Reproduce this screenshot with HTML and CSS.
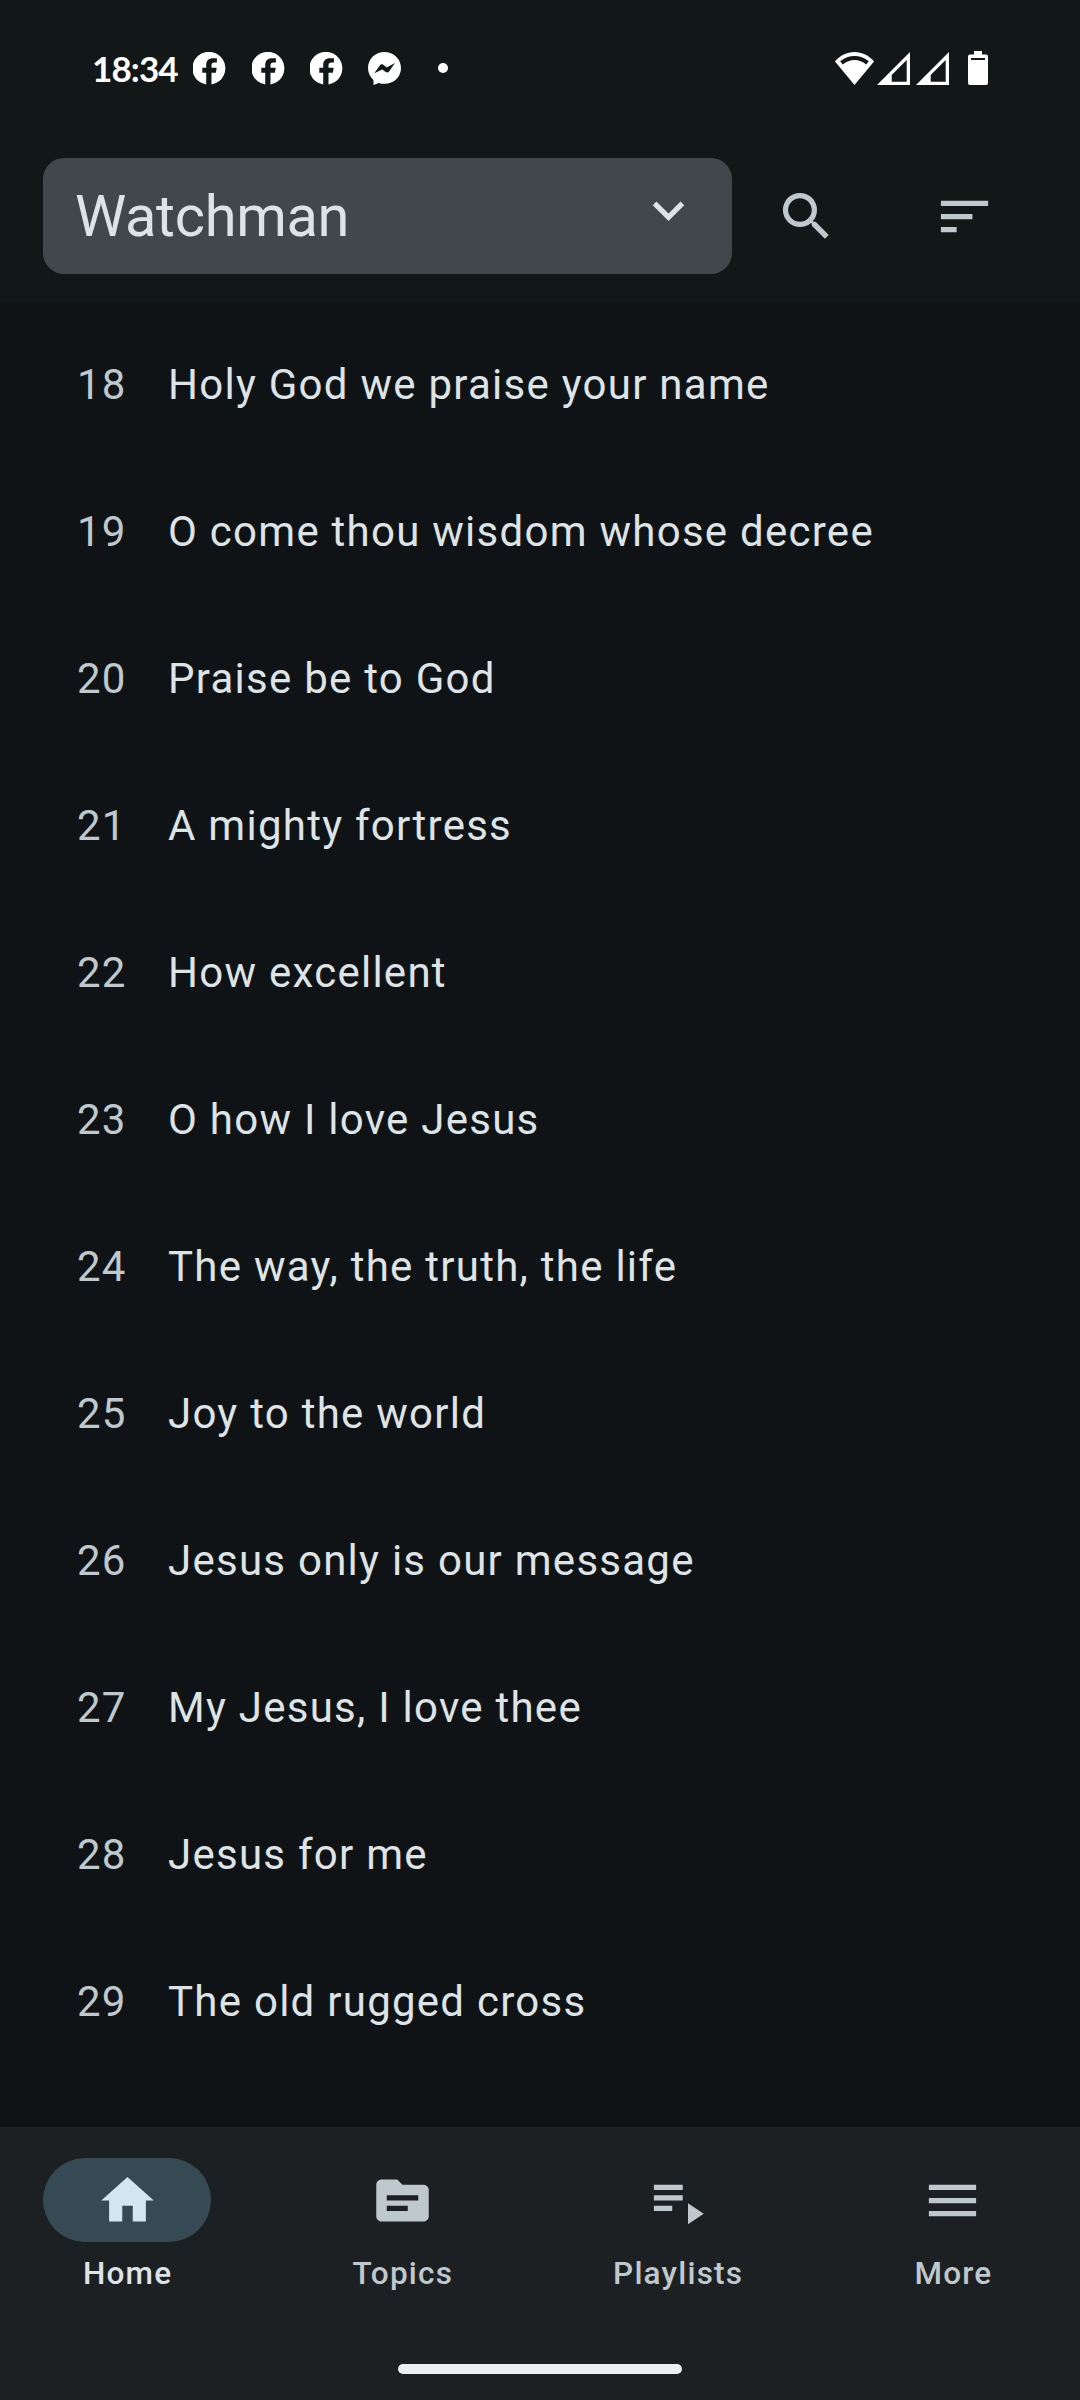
FILE: index.html
```html
<!DOCTYPE html>
<html lang="en">
<head>
<meta charset="utf-8">
<title>Watchman</title>
<link rel="stylesheet" href="styles.css">
</head>
<body>
<svg class="defs" aria-hidden="true">
  <symbol id="facebook" viewBox="0 0 33 33"><path d="M13.200 32.600V20.800H9.300v-5.100h3.900v-2.500c0-4.500 2.400-7 6.800-7h3.900v4.400h-2.500c-2 0-2.900.9-2.900 2.600v2.500h5.200l-.8 5.100h-4.400v11.800A16.500 16.500 0 1 0 13.200 32.600z"/></symbol>
  <symbol id="signal" viewBox="0 0 33 33"><path fill-rule="evenodd" d="M33 0v33H0zM29.700 8 14.700 23V29.700h15z"/></symbol>
</svg>
<div class="screen">
  <header class="top">
    <div class="status">
      <span class="clock">18:34</span>
      <div class="notifications">
        <svg class="app"><use href="#facebook"/></svg>
        <svg class="app"><use href="#facebook"/></svg>
        <svg class="app"><use href="#facebook"/></svg>
        <svg class="app" viewBox="0 0 33 33"><path fill-rule="evenodd" d="M16.500 0C7.200 0 0 6.900 0 16c0 4.800 2 8.900 5.500 11.900V33l5.200-2.100c1.800.6 3.800.9 5.800.9C25.800 31.800 33 25 33 16S25.800 0 16.500 0zM6.300 21.200 12 13.300c.8-1.100 2.100-1.300 3.200-.6l3.600 2.800 8.100-4.500-5.800 8.500c-.8 1.200-2.200 1.400-3.300.6l-3.600-2.600z"/></svg>
      </div>
      <i class="dot"></i>
      <div class="system">
        <svg class="wifi" viewBox="0 0 39 33"><path fill-rule="evenodd" d="M0 9.500C5 3.500 12 0 19.500 0S34 3.500 39 9.500L19.500 33zM5.200 9.200l2.600 3.200c7-6 16.400-6 23.400 0l2.600-3.200c-8.500-7-20.100-7-28.600 0z"/></svg>
        <svg class="signal"><use href="#signal"/></svg>
        <svg class="signal"><use href="#signal"/></svg>
        <svg class="battery" viewBox="0 0 20 34"><path fill-rule="evenodd" d="M6 0h8v3.500h4a2 2 0 0 1 2 2V32a2 2 0 0 1-2 2H2a2 2 0 0 1-2-2V5.500a2 2 0 0 1 2-2h4zM3 7v2h14V7z"/></svg>
      </div>
    </div>
    <div class="toolbar">
      <div class="select">
        <span>Watchman</span>
        <svg class="icon" viewBox="0 0 24 24"><path d="M16.590 8.590 12 13.170 7.410 8.590 6 10l6 6 6-6z"/></svg>
      </div>
      <svg class="icon search" viewBox="0 0 24 24"><path d="M15.500 14h-.79l-.28-.27A6.471 6.471 0 0 0 16 9.500 6.500 6.500 0 1 0 9.500 16c1.610 0 3.090-.59 4.230-1.570l.27.280v.79l5 4.990L20.490 19l-4.990-5zm-6 0C7.010 14 5 11.990 5 9.500S7.010 5 9.500 5 14 7.010 14 9.500 11.990 14 9.500 14z"/></svg>
      <svg class="icon" viewBox="0 0 24 24"><path d="M3 18h6v-2H3v2zM3 6v2h18V6H3zm0 7h12v-2H3v2z"/></svg>
    </div>
  </header>
  <main class="songs">
    <div class="song"><span class="number">18</span><span>Holy God we praise your name</span></div>
    <div class="song"><span class="number">19</span><span>O come thou wisdom whose decree</span></div>
    <div class="song"><span class="number">20</span><span>Praise be to God</span></div>
    <div class="song"><span class="number">21</span><span>A mighty fortress</span></div>
    <div class="song"><span class="number">22</span><span>How excellent</span></div>
    <div class="song"><span class="number">23</span><span>O how I love Jesus</span></div>
    <div class="song"><span class="number">24</span><span>The way, the truth, the life</span></div>
    <div class="song"><span class="number">25</span><span>Joy to the world</span></div>
    <div class="song"><span class="number">26</span><span>Jesus only is our message</span></div>
    <div class="song"><span class="number">27</span><span>My Jesus, I love thee</span></div>
    <div class="song"><span class="number">28</span><span>Jesus for me</span></div>
    <div class="song"><span class="number">29</span><span>The old rugged cross</span></div>
  </main>
  <footer class="bottom">
    <nav class="tabs">
      <div class="tab active"><div class="pill"><svg class="icon" viewBox="0 0 24 24"><path d="M10 20v-6h4v6h5v-8h3L12 3 2 12h3v8z"/></svg></div><span>Home</span></div>
      <div class="tab"><div class="pill"><svg class="icon" viewBox="0 0 24 24"><path d="M20 6h-8l-2-2H4c-1.100 0-1.990.9-1.990 2L2 18c0 1.100.9 2 2 2h16c1.100 0 2-.9 2-2V8c0-1.100-.9-2-2-2zm-6 10H6v-2h8v2zm4-4H6v-2h12v2z"/></svg></div><span>Topics</span></div>
      <div class="tab"><div class="pill"><svg class="icon" viewBox="0 0 24 24"><path d="M3 10h11v2H3zM3 6h11v2H3zM3 14h7v2H3zM16 13v8l6-4z"/></svg></div><span>Playlists</span></div>
      <div class="tab"><div class="pill"><svg class="icon" viewBox="0 0 24 24"><path d="M3 18h18v-2H3v2zm0-5h18v-2H3v2zm0-7v2h18V6H3z"/></svg></div><span>More</span></div>
    </nav>
    <div class="handle"></div>
  </footer>
</div>
</body>
</html>
```
FILE: styles.css
```css
* { box-sizing: border-box; }
body { margin: 0; background: #0f1417; }
.defs { display: none; }
svg { display: block; fill: currentColor; flex: none; }
.screen {
  display: flex;
  flex-direction: column;
  width: 1080px;
  height: 2400px;
  overflow: hidden;
  background: #0f1316;
  font-family: Roboto, sans-serif;
  color: #dee3e6;
}
.top { height: 303px; background: #121718; }
.status {
  display: flex;
  align-items: center;
  height: 136px;
  padding: 0 92px 0 92px;
  color: #fff;
}
.clock { width: 101.400px; font: 700 35px/44px Lato, sans-serif; letter-spacing: -0.900px; }
.notifications { display: flex; gap: 25.200px; }
.app { width: 33px; height: 33px; }
.dot { width: 10px; height: 10px; margin-left: 37px; border-radius: 50%; background: #fff; }
.system { display: flex; align-items: center; margin-left: auto; }
.wifi { width: 39px; height: 33px; }
.signal { width: 33px; height: 33px; margin-left: 3px; }
.signal + .signal { margin-left: 6px; }
.battery { width: 20px; height: 34px; margin-left: 19px; }
.icon { width: 63px; height: 63px; }
.toolbar {
  display: flex;
  align-items: center;
  padding: 22px 84px 0 43px;
  color: #bfc8cc;
}
.select {
  display: flex;
  justify-content: space-between;
  width: 689px;
  height: 116px;
  padding: 21px 32px;
  border-radius: 21px;
  background: #40484c;
  color: #dee3e6;
  font-size: 57.75px;
  line-height: 74px;
  letter-spacing: -0.300px;
}
.search { margin: 0 95px 0 43px; }
.songs { flex: 1; padding-top: 8px; overflow: hidden; }
.song {
  display: flex;
  align-items: center;
  height: 147px;
  padding-left: 77px;
  font-size: 42px;
  letter-spacing: 1.260px;
}
.number { width: 91px; color: #bfc8cc; }
.bottom { height: 273px; padding-top: 31px; background: #1c2023; }
.tabs { display: grid; grid-template-columns: repeat(4, 1fr); gap: 21px; }
.tab {
  display: flex;
  flex-direction: column;
  align-items: center;
  gap: 10.5px;
  color: #bfc8cc;
  font-size: 31.5px;
  font-weight: 500;
  line-height: 42px;
  letter-spacing: 1.200px;
}
.tab > span { padding-left: 1px; }
.pill {
  display: grid;
  place-items: center;
  width: 168px;
  height: 84px;
  border-radius: 42px;
}
.active { color: #dee3e6; }
.active .pill { background: #354a53; color: #d1e6f1; }
.handle { width: 284px; height: 10px; margin: 69.500px auto 0; border-radius: 5px; background: #eceef0; }
```
